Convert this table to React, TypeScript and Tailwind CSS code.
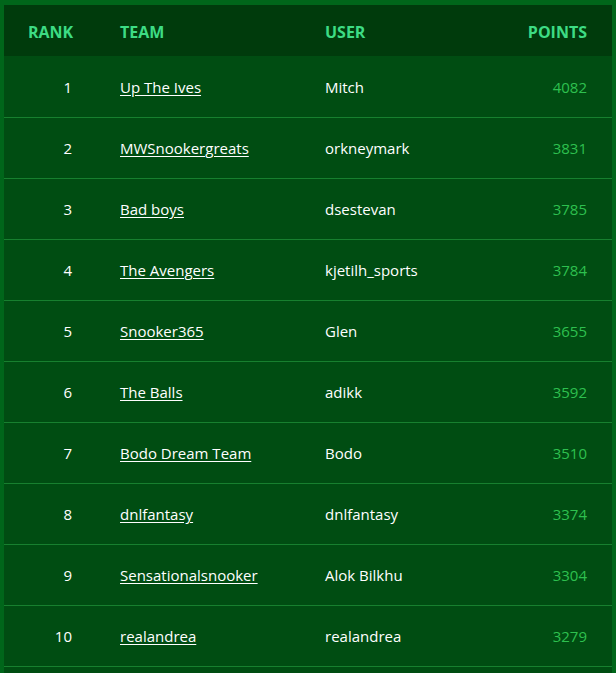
const rows = [
  { rank: 1, team: "Up The Ives", user: "Mitch", points: 4082 },
  { rank: 2, team: "MWSnookergreats", user: "orkneymark", points: 3831 },
  { rank: 3, team: "Bad boys", user: "dsestevan", points: 3785 },
  { rank: 4, team: "The Avengers", user: "kjetilh_sports", points: 3784 },
  { rank: 5, team: "Snooker365", user: "Glen", points: 3655 },
  { rank: 6, team: "The Balls", user: "adikk", points: 3592 },
  { rank: 7, team: "Bodo Dream Team", user: "Bodo", points: 3510 },
  { rank: 8, team: "dnlfantasy", user: "dnlfantasy", points: 3374 },
  { rank: 9, team: "Sensationalsnooker", user: "Alok Bilkhu", points: 3304 },
  { rank: 10, team: "realandrea", user: "realandrea", points: 3279 },
]

export default function App() {
  return (
    <div className="min-h-[673px] bg-[#004d12] font-['Open_Sans',sans-serif] text-[15px]">
      <div className="border-x-4 border-t-[5px] border-[#00661a] bg-[#004d12] pb-4">
        <table className="w-full table-fixed border-collapse">
          <thead>
            <tr className="h-[51px] bg-[#003b0c] text-[16px] font-bold uppercase text-[#3ddc84]">
              <th className="w-[92px] pl-6 pr-6 pt-[2px] text-right">Rank</th>
              <th className="w-[205px] px-6 pt-[2px] text-left">Team</th>
              <th className="px-6 pt-[2px] text-left">User</th>
              <th className="w-[130px] pl-6 pr-[25px] pt-[2px] text-right">Points</th>
            </tr>
          </thead>
          <tbody>
            {rows.map((r) => (
              <tr key={r.rank} className="h-[61px] border-b border-[#17802f] text-white">
                <td className="px-6 pt-[2px] text-right">{r.rank}</td>
                <td className="px-6 pt-[2px]">
                  <a href="#" className="underline underline-offset-2">
                    {r.team}
                  </a>
                </td>
                <td className="px-6 pt-[2px]">{r.user}</td>
                <td className="pl-6 pr-[25px] pt-[2px] text-right text-[#2ec04f]">{r.points}</td>
              </tr>
            ))}
          </tbody>
        </table>
      </div>
    </div>
  )
}
